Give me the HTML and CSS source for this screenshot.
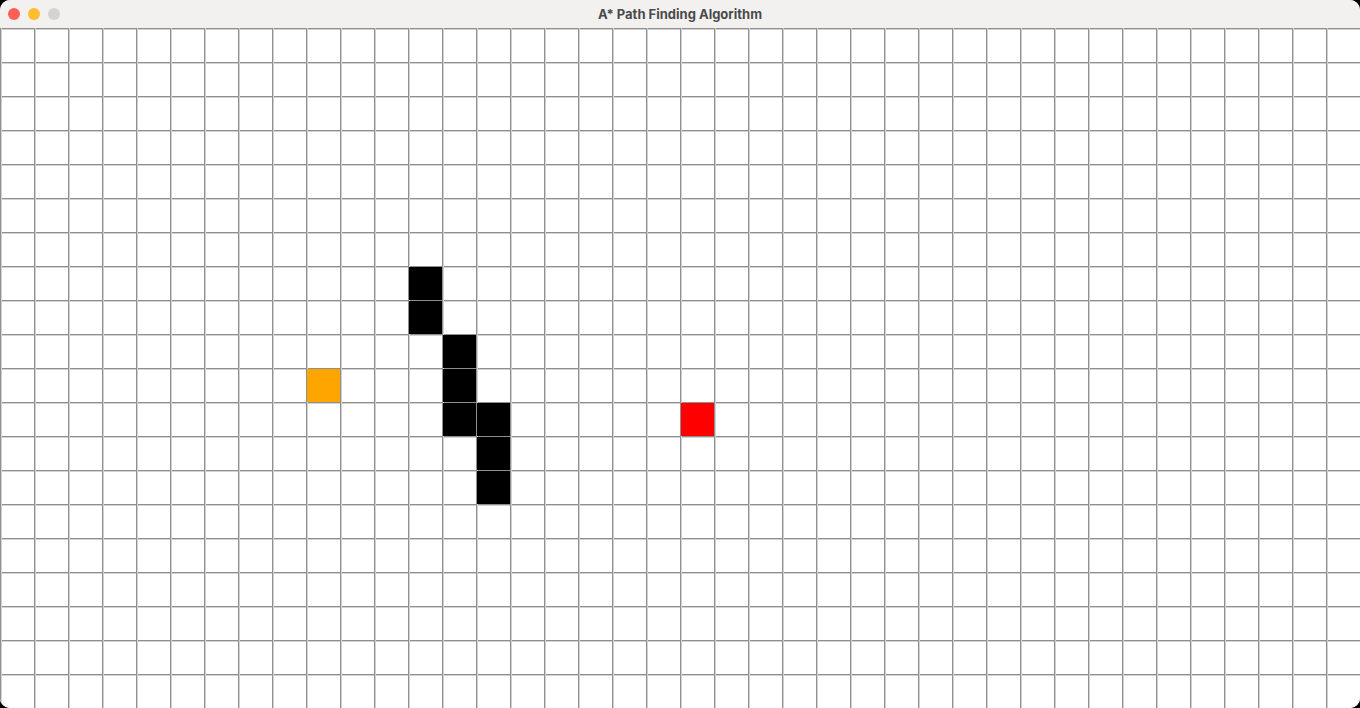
FILE: index.html
```html
<!DOCTYPE html>
<html lang="en">
<head>
<meta charset="utf-8">
<title>A* Path Finding Algorithm</title>
<link rel="stylesheet" href="styles.css">
</head>
<body>
<div class="window">
  <header class="titlebar">
    <div class="lights">
      <span class="light close"></span>
      <span class="light minimize"></span>
      <span class="light zoom"></span>
    </div>
    <div class="title">A* Path Finding Algorithm</div>
  </header>
  <main class="board">
    <div class="cell wall w1"></div>
    <div class="cell wall w2"></div>
    <div class="cell wall w3"></div>
    <div class="cell wall w4"></div>
    <div class="cell wall w5"></div>
    <div class="cell wall w6"></div>
    <div class="cell wall w7"></div>
    <div class="cell wall w8"></div>
    <div class="cell start"></div>
    <div class="cell end"></div>
  </main>
</div>
</body>
</html>
```
FILE: styles.css
```css
html, body {
  margin: 0;
  padding: 0;
  background: #000;
}
body {
  width: 1360px;
  height: 708px;
  overflow: hidden;
  font-family: "Inter", "Open Sans", "Liberation Sans", sans-serif;
}
.window {
  width: 1360px;
  height: 708px;
  border-radius: 10px;
  overflow: hidden;
  background: #fff;
  display: flex;
  flex-direction: column;
}
.titlebar {
  height: 28px;
  flex: none;
  background: #f2f1f0;
  display: flex;
  align-items: center;
  position: relative;
}
.lights {
  display: flex;
  gap: 8px;
  padding-left: 8px;
}
.light {
  width: 12px;
  height: 12px;
  border-radius: 50%;
  display: block;
}
.close { background: #ff5f57; }
.minimize { background: #febc2e; }
.zoom { background: #d3d3d3; }
.title {
  position: absolute;
  left: 0;
  right: 0;
  top: 0;
  line-height: 28px;
  text-align: center;
  font-size: 13px;
  font-weight: 700;
  color: #4a4a4a;
}
.board {
  flex: none;
  width: 1360px;
  height: 680px;
  box-sizing: border-box;
  padding: 1px 0 0 1px;
  display: grid;
  grid-template-columns: repeat(40, 33px);
  grid-template-rows: repeat(20, 33px);
  gap: 1px;
  background-color: #fff;
  background-image:
    linear-gradient(to right, #8f8f8f 1px, #d2d2d2 1px, #d2d2d2 2px, transparent 2px),
    linear-gradient(to bottom, #8f8f8f 1px, #d2d2d2 1px, #d2d2d2 2px, transparent 2px);
  background-size: 34px 34px;
}
.wall { background: #000; }
.start { background: #ffa500; grid-column: 10; grid-row: 11; }
.end { background: #ff0000; grid-column: 21; grid-row: 12; }
.w1 { grid-column: 13; grid-row: 8; }
.w2 { grid-column: 13; grid-row: 9; }
.w3 { grid-column: 14; grid-row: 10; }
.w4 { grid-column: 14; grid-row: 11; }
.w5 { grid-column: 14; grid-row: 12; }
.w6 { grid-column: 15; grid-row: 12; }
.w7 { grid-column: 15; grid-row: 13; }
.w8 { grid-column: 15; grid-row: 14; }
```
